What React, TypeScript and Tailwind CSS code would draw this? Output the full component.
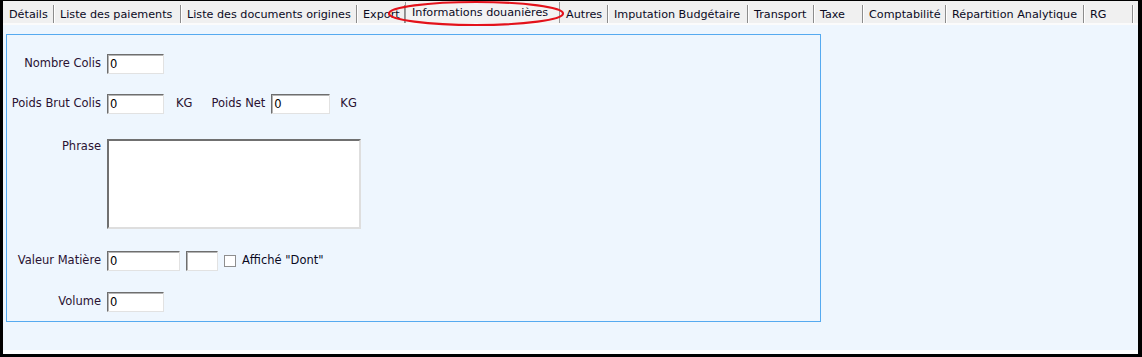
import React from 'react';

const tabs = [
  { label: 'Détails', w: 'w-[51px]' },
  { label: 'Liste des paiements', w: 'w-[127px]' },
  { label: 'Liste des documents origines', w: 'w-[176px]' },
  { label: 'Export', w: 'w-[48px]' },
  { label: 'Informations douanières', w: 'w-[155px]', active: true },
  { label: 'Autres', w: 'w-[48px]' },
  { label: 'Imputation Budgétaire', w: 'w-[140px]' },
  { label: 'Transport', w: 'w-[66px]' },
  { label: 'Taxe', w: 'w-[49px]' },
  { label: 'Comptabilité', w: 'w-[83px]' },
  { label: 'Répartition Analytique', w: 'w-[138px]' },
  { label: 'RG', w: 'w-[49px]' },
];

const inputCls =
  'h-[20px] bg-white border-t border-l border-t-[#6e6e6e] border-l-[#6e6e6e] border-b border-r border-b-[#e2e2e2] border-r-[#e2e2e2] shadow-[inset_1px_1px_0_#b4b4b4] px-[2px] text-[11.5px] text-black leading-[18px] outline-none';

const Field: React.FC<{ value?: string; w: string }> = ({ value = '', w }) => (
  <input readOnly value={value} className={`${inputCls} ${w}`} />
);

const Label: React.FC<{ children: React.ReactNode; className?: string }> = ({ children, className = '' }) => (
  <span className={`w-[94px] shrink-0 text-right text-[#2a1232] ${className}`}>{children}</span>
);

export default function App() {
  return (
    <div
      className="relative w-[1142px] h-[357px] bg-black pt-[1px] pl-[3px] pr-[4px] pb-[3px] flex flex-col"
      style={{ fontFamily: '"DejaVu Sans", Verdana, sans-serif' }}
    >
      {/* tab strip */}
      <div className="h-[22px] bg-[#f0f0f0] flex items-start text-[11.2px] text-[#0a0a1e]">
        {tabs.map((t) =>
          t.active ? (
            <div
              key={t.label}
              className={`${t.w} shrink-0 mt-[1px] h-[21px] border-x border-x-[#9a9a9a] bg-[#f3f3f3] pl-[6px] leading-[21px] whitespace-nowrap`}
            >
              {t.label}
            </div>
          ) : (
            <div
              key={t.label}
              className={`${t.w} shrink-0 mt-[4px] h-[18px] border-r border-r-[#8c8c8c] shadow-[1px_0_0_#ffffff] pl-[6px] leading-[19px] whitespace-nowrap overflow-hidden`}
            >
              {t.label}
            </div>
          )
        )}
      </div>
      <div className="h-[2px] bg-[#fbfbfb]" />

      {/* content */}
      <div className="flex-1 bg-[#eef6fe] pt-[9px] pl-[3px]">
        <div className="w-[815px] h-[288px] border border-[#55aaf0] text-[11.5px] flex flex-col">
          <div className="mt-[19px] flex items-center gap-[6px]">
            <Label>Nombre Colis</Label>
            <Field value="0" w="w-[57px]" />
          </div>

          <div className="mt-[20px] flex items-center gap-[6px]">
            <Label>Poids Brut Colis</Label>
            <Field value="0" w="w-[57px]" />
            <span className="ml-[6px] text-[#2a1232]">KG</span>
            <span className="ml-[13px] text-[#2a1232]">Poids Net</span>
            <Field value="0" w="w-[59px]" />
            <span className="ml-[4px] text-[#2a1232]">KG</span>
          </div>

          <div className="mt-[25px] flex items-start gap-[6px]">
            <Label className="-mt-[1px]">Phrase</Label>
            <textarea
              readOnly
              className="w-[254px] h-[90px] bg-white resize-none border-t-2 border-l-2 border-t-[#707070] border-l-[#707070] border-b-2 border-r-2 border-b-[#dedede] border-r-[#dedede] outline-none"
            />
          </div>

          <div className="mt-[22px] flex items-center gap-[6px]">
            <Label>Valeur Matière</Label>
            <Field value="0" w="w-[73px]" />
            <Field w="w-[32px]" />
            <span className="w-[12px] h-[12px] bg-white border border-[#8e8e8e]" />
            <span className="text-[#0a0a1e]">Affiché "Dont"</span>
          </div>

          <div className="mt-[21px] flex items-center gap-[6px]">
            <Label>Volume</Label>
            <Field value="0" w="w-[57px]" />
          </div>
        </div>
      </div>
      <div className="h-[4px] bg-white" />

      {/* annotation */}
      <svg className="absolute left-0 top-0 pointer-events-none" width="1142" height="40">
        <ellipse cx="476" cy="13.5" rx="87" ry="11.5" fill="none" stroke="#e3121b" strokeWidth="2.2" />
      </svg>
    </div>
  );
}
